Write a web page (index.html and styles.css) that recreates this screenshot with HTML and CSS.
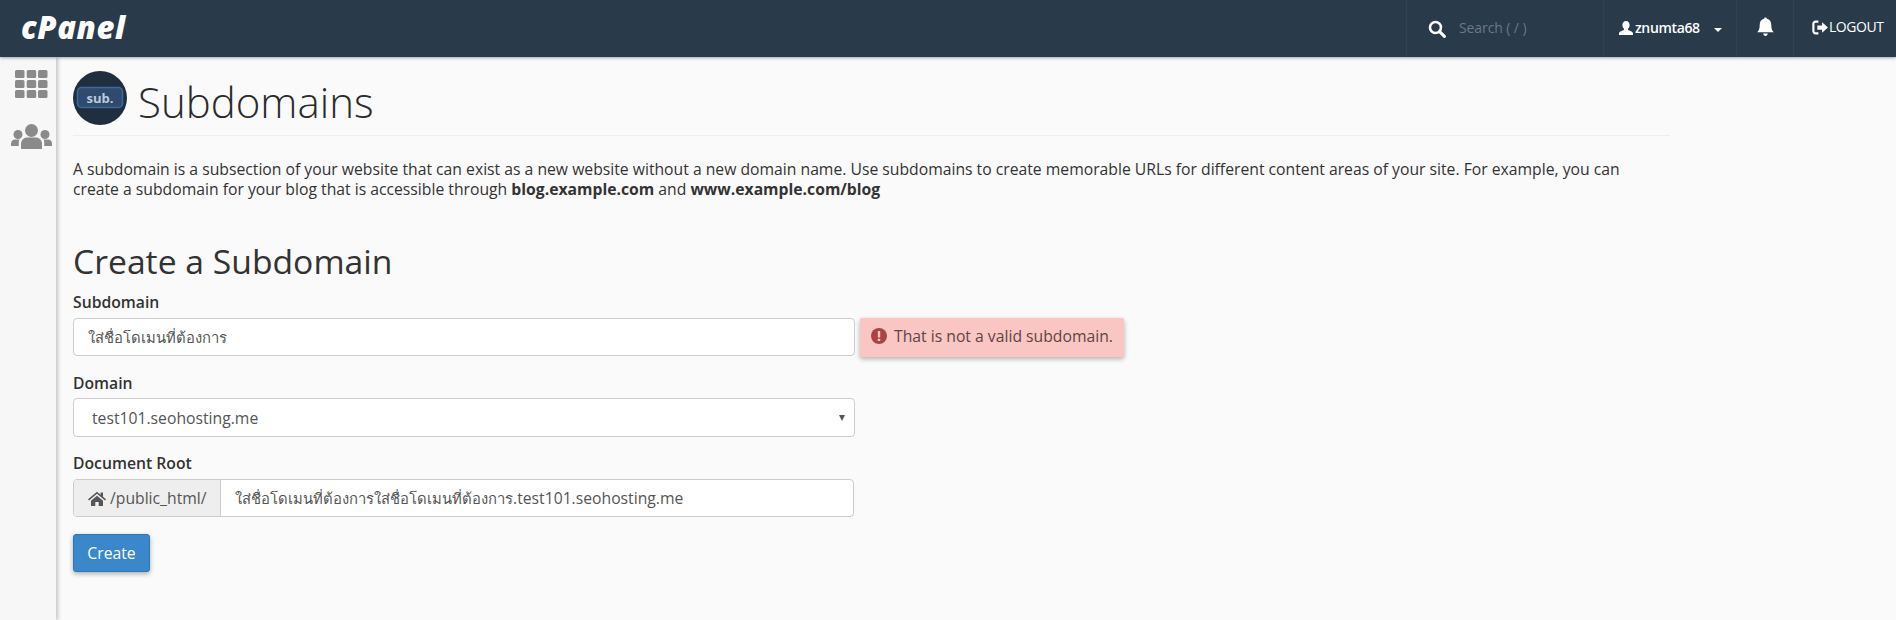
FILE: index.html
```html
<!DOCTYPE html>
<html lang="en">
<head>
<meta charset="utf-8">
<title>Subdomains</title>
<link rel="stylesheet" href="styles.css">
</head>
<body>
<header class="topbar">
  <div class="logo">cPanel</div>
  <div class="top-items">
    <div class="top-item search">
      <svg class="ico-search" viewBox="0 0 18 18"><circle cx="7.500" cy="7.500" r="5.500" fill="none" stroke="#fff" stroke-width="2.600"/><path d="M11.600 11.600 16.400 16.400" stroke="#fff" stroke-width="3" stroke-linecap="round"/></svg>
      <span class="search-text">Search ( / )</span>
    </div>
    <div class="top-item user">
      <svg class="ico-user" viewBox="0 0 16 16"><path d="M8 1c2.300 0 3.600 1.700 3.600 4 0 1.600-.7 3-1.600 3.800v1.200c1.800.7 5 1.500 5 3.500v1.500H1v-1.500c0-2 3.200-2.800 5-3.500V8.800C5.100 8 4.400 6.600 4.400 5 4.400 2.700 5.700 1 8 1z" fill="#fff"/></svg>
      <span class="user-name">znumta68</span>
      <span class="caret"></span>
    </div>
    <div class="top-item bell">
      <svg class="ico-bell" viewBox="0 0 18 20"><path d="M9 1c.8 0 1.300.5 1.300 1.200C13 2.800 14.500 5 14.500 8c0 4 1 5.500 2.500 7H1c1.500-1.500 2.500-3 2.500-7 0-3 1.500-5.200 4.200-5.800C7.700 1.500 8.200 1 9 1zM6.800 16.200h4.400C11 17.700 10.100 18.600 9 18.600s-2-.9-2.200-2.400z" fill="#fff"/></svg>
    </div>
    <div class="top-item logout">
      <svg class="ico-logout" viewBox="0 0 16 14"><path d="M6 1.500H3.500A2.200 2.200 0 0 0 1.300 3.700v6.600a2.200 2.200 0 0 0 2.200 2.200H6" fill="none" stroke="#fff" stroke-width="2"/><path d="M5 5h4.500V2L15 7l-5.500 5V9H5z" fill="#fff"/></svg>
      <span>LOGOUT</span>
    </div>
  </div>
</header>
<div class="shell">
  <aside class="sidebar">
    <svg class="ico-grid" viewBox="0 0 33 29"><g fill="#8a8a8a"><rect x="0" y="0" width="9.500" height="8" rx="1.500"/><rect x="11.700" y="0" width="9.500" height="8" rx="1.500"/><rect x="23" y="0" width="9.500" height="8" rx="1.500"/><rect x="0" y="10" width="9.500" height="8" rx="1.500"/><rect x="11.700" y="10" width="9.500" height="8" rx="1.500"/><rect x="23" y="10" width="9.500" height="8" rx="1.500"/><rect x="0" y="20" width="9.500" height="8" rx="1.500"/><rect x="11.700" y="20" width="9.500" height="8" rx="1.500"/><rect x="23" y="20" width="9.500" height="8" rx="1.500"/></g></svg>
    <svg class="ico-users" viewBox="0 0 41 25"><g fill="#8a8a8a"><circle cx="20.500" cy="6.500" r="6.500"/><circle cx="7" cy="10.500" r="4.500"/><circle cx="34" cy="10.500" r="4.500"/><path d="M10 25v-5c0-4 3-6.500 6-6.500h9c3 0 6 2.500 6 6.500v5z"/><path d="M0 22v-2.500C0 17 2 15.500 4 15.500h4.500C7.500 17 7.800 19 7.800 22z"/><path d="M41 22v-2.500c0-2.500-2-4-4-4h-4.500c1 1.500.7 3.500.7 6.500z"/></g></svg>
  </aside>
  <main class="content">
    <div class="page-head">
      <svg class="page-icon" viewBox="0 0 54 54"><circle cx="27" cy="27" r="27" fill="#1f2f3f"/><rect x="4.500" y="16.500" width="45" height="20" rx="4" fill="#2f4a6e" stroke="#3f6a97" stroke-width="1.500"/><text x="27" y="32" class="page-icon-text" text-anchor="middle">sub.</text></svg>
      <h1 class="page-title">Subdomains</h1>
    </div>
    <p class="intro">A subdomain is a subsection of your website that can exist as a new website without a new domain name. Use subdomains to create memorable URLs for different content areas of your site. For example, you can create a subdomain for your blog that is accessible through <strong>blog.example.com</strong> and <strong>www.example.com/blog</strong></p>
    <h2 class="section-title">Create a Subdomain</h2>
    <form class="form">
      <label class="label">Subdomain</label>
      <div class="row">
        <div class="control control-sub"><span class="thai">ใส่ชื่อโดเมนที่ต้องการ</span></div>
        <div class="alert">
          <svg class="ico-alert" viewBox="0 0 16 16"><circle cx="8" cy="8" r="8" fill="#a94442"/><rect x="6.800" y="3" width="2.400" height="6.500" rx=".6" fill="#f9c6c3"/><rect x="6.800" y="10.700" width="2.400" height="2.400" rx=".6" fill="#f9c6c3"/></svg>
          <span class="alert-text">That is not a valid subdomain.</span>
        </div>
      </div>
      <label class="label label-domain">Domain</label>
      <div class="control select">
        <span>test101.seohosting.me</span>
        <span class="select-arrow"></span>
      </div>
      <label class="label label-root">Document Root</label>
      <div class="group">
        <div class="addon">
          <svg class="ico-home" viewBox="0 0 18 15"><path d="M9 .8 0 8.200l1 1.200L9 2.800l8 6.600 1-1.200-3-2.500V1.500h-2.400v2.300z" fill="#555"/><path d="M3 9.800 9 4.800l6 5V15h-4.300v-4H7.300v4H3z" fill="#555"/></svg>
          <span>/public_html/</span>
        </div>
        <div class="group-value"><span><span class="thai">ใส่ชื่อโดเมนที่ต้องการใส่ชื่อโดเมนที่ต้องการ</span>.test101.seohosting.me</span></div>
      </div>
      <button type="button" class="btn">Create</button>
    </form>
  </main>
</div>
</body>
</html>
```

FILE: styles.css
```css
* { box-sizing: border-box; }
html, body { margin: 0; height: 100%; }
body {
  font-family: "Open Sans", "Noto Sans", "Liberation Sans", sans-serif;
  font-size: 15.73px;
  line-height: 20px;
  color: #333;
  background: #fafafa;
  overflow: hidden;
}
.topbar {
  height: 57px;
  background: #293a4a;
  display: flex;
  justify-content: space-between;
  color: #fff;
  box-shadow: 0 1px 3px rgba(0,0,0,.35);
  position: relative;
  z-index: 2;
}
.logo {
  font-family: "Open Sans", sans-serif;
  font-weight: 800;
  font-style: italic;
  font-size: 31px;
  letter-spacing: .6px;
  line-height: 55px;
  padding-left: 21px;
  color: #fff;
}
.top-items { display: flex; height: 57px; }
.top-item {
  display: flex;
  align-items: center;
  border-left: 1px solid #2f4152;
  font-size: 14px;
}
.search { width: 197px; padding-left: 21px; }
.ico-search { width: 18px; height: 18px; margin-right: 13px; }
.search-text { color: #6b7885; letter-spacing: -.1px; margin-bottom: 1px; }
.user { width: 133px; padding-left: 14px; }
.ico-user { width: 16px; height: 16px; margin-right: 1px; margin-bottom: 2px; }
.user-name { letter-spacing: -.35px; font-weight: 600; margin-bottom: 1px; }
.caret {
  margin-left: 14px;
  margin-top: 2px;
  border-left: 4px solid transparent;
  border-right: 4px solid transparent;
  border-top: 4px solid #fff;
}
.bell { width: 57px; justify-content: center; }
.ico-bell { width: 19px; height: 22px; margin-bottom: 3px; }
.logout { width: 103px; padding-left: 18px; letter-spacing: -.45px; font-weight: 500; }
.ico-logout { width: 17px; height: 15px; margin-bottom: 3px; }
.logout span { margin-bottom: 3px; }
.shell { display: flex; height: 563px; }
.sidebar {
  width: 56px;
  background: #f7f7f7;
  box-shadow: 2px 0 4px rgba(0,0,0,.22);
  display: flex;
  flex-direction: column;
  align-items: center;
  padding: 13px 0 0 6px;
  flex: none;
}
.ico-grid { width: 33px; height: 29px; }
.ico-users { width: 41px; height: 25px; margin-top: 25px; }
.content { width: 1614px; padding: 14px 0 0 17px; }
.page-head {
  display: flex;
  align-items: center;
  height: 65px;
  padding-bottom: 11px;
  border-bottom: 1px solid #eee;
}
.page-icon { width: 54px; height: 54px; flex: none; }
.page-icon-text {
  font-family: "Open Sans", sans-serif;
  font-size: 13px;
  font-weight: 700;
  fill: #bccbdb;
}
.page-title {
  margin: 9px 0 0 11px;
  font-size: 42px;
  font-weight: 300;
  line-height: 54px;
  color: #2b2b2b;
}
.intro { margin: 23px 0 0; width: 1590px; }
.section-title {
  margin: 42px 0 0;
  font-size: 33.700px;
  font-weight: 400;
  line-height: 40px;
  color: #333;
}
.form { display: block; margin-top: 11px; }
.label { display: block; font-weight: 600; font-size: 15.73px; line-height: 20px; }
.label-domain { margin-top: 16px; }
.label-root { margin-top: 16px; }
.row { display: flex; align-items: center; margin-top: 5px; height: 40px; }
.control {
  width: 782px;
  height: 38px;
  background: #fff;
  border: 1px solid #ccc;
  border-radius: 4px;
  padding: 0 14px;
  display: flex;
  align-items: center;
  color: #555;
  flex: none;
}
.thai { font-size: 14.800px; }
.select { justify-content: space-between; margin-top: 5px; padding: 0 9px 0 18px; height: 39px; }
.select-arrow {
  border-left: 3.500px solid transparent;
  border-right: 3.500px solid transparent;
  border-top: 6px solid #555;
}
.alert {
  margin-left: 5px;
  width: 264px;
  height: 39px;
  background: #f9c6c3;
  color: #5f4444;
  border-radius: 2px;
  box-shadow: 0 2px 5px rgba(0,0,0,.3);
  display: flex;
  align-items: center;
  padding-left: 11px;
}
.alert-text { margin-bottom: 2px; }
.ico-alert { width: 16px; height: 16px; margin-right: 7px; flex: none; margin-bottom: 2px; }
.group {
  display: flex;
  width: 781px;
  height: 38px;
  margin-top: 6px;
  border: 1px solid #ccc;
  border-radius: 4px;
  background: #fff;
  overflow: hidden;
}
.addon {
  width: 147px;
  background: #eee;
  border-right: 1px solid #ccc;
  display: flex;
  align-items: center;
  padding-left: 14px;
  color: #555;
  flex: none;
}
.ico-home { width: 18px; height: 15px; margin-right: 4px; }
.group-value { padding-left: 14px; display: flex; align-items: center; color: #555; }
.btn {
  display: block;
  margin-top: 17px;
  width: 77px;
  height: 38px;
  background: #3a87cc;
  color: #fff;
  border: 1px solid #2f76b5;
  border-radius: 3px;
  font-family: inherit;
  font-size: 15.73px;
  box-shadow: 0 2px 5px rgba(0,0,0,.3);
  padding: 0;
}
```
